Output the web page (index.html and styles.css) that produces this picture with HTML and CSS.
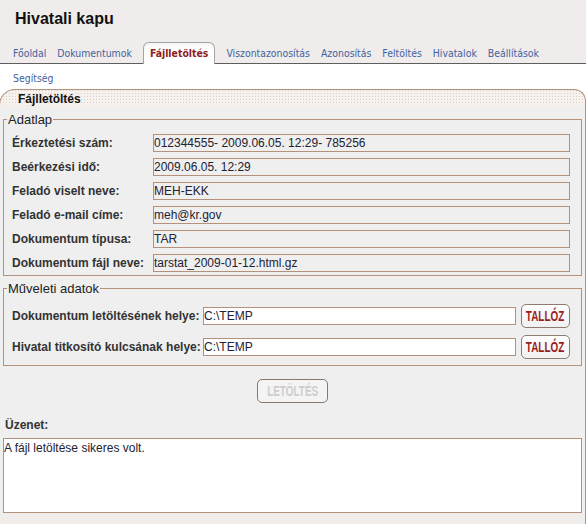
FILE: index.html
```html
<!DOCTYPE html>
<html lang="hu">
<head>
<meta charset="utf-8">
<title>Hivatali kapu</title>
<link rel="stylesheet" href="styles.css">
</head>
<body>
<div class="top">
  <div class="title">Hivatali kapu</div>
  <nav class="tabs">
    <a class="tab" href="#">Főoldal</a>
    <a class="tab" href="#">Dokumentumok</a>
    <a class="tab active" href="#">Fájlletöltés</a>
    <a class="tab" href="#">Viszontazonosítás</a>
    <a class="tab" href="#">Azonosítás</a>
    <a class="tab" href="#">Feltöltés</a>
    <a class="tab" href="#">Hivatalok</a>
    <a class="tab" href="#">Beállítások</a>
  </nav>
</div>
<div class="subnav"><a class="tab" href="#">Segítség</a></div>
<div class="panel">
  <div class="panel-head">Fájlletöltés</div>
  <div class="panel-body">
    <fieldset class="box">
      <legend>Adatlap</legend>
      <div class="grid">
        <label>Érkeztetési szám:</label><input class="ro" readonly value="012344555- 2009.06.05. 12:29- 785256">
        <label>Beérkezési idő:</label><input class="ro" readonly value="2009.06.05. 12:29">
        <label>Feladó viselt neve:</label><input class="ro" readonly value="MEH-EKK">
        <label>Feladó e-mail címe:</label><input class="ro" readonly value="meh@kr.gov">
        <label>Dokumentum típusa:</label><input class="ro" readonly value="TAR">
        <label>Dokumentum fájl neve:</label><input class="ro" readonly value="tarstat_2009-01-12.html.gz">
      </div>
    </fieldset>
    <fieldset class="box ops">
      <legend>Műveleti adatok</legend>
      <div class="grid2">
        <label>Dokumentum letöltésének helye:</label><input class="field" value="C:\TEMP"><button class="btn"><span>TALLÓZ</span></button>
        <label>Hivatal titkosító kulcsának helye:</label><input class="field" value="C:\TEMP"><button class="btn"><span>TALLÓZ</span></button>
      </div>
    </fieldset>
    <div class="actions"><button class="btn big" disabled><span>LETÖLTÉS</span></button></div>
    <div class="msg-label">Üzenet:</div>
    <textarea class="msg">A fájl letöltése sikeres volt.</textarea>
  </div>
  <div class="panel-foot"></div>
</div>
</body>
</html>
```
FILE: styles.css
```css
body {
  margin: 0;
  background: #ffffff;
  font-family: "Liberation Sans", Arial, sans-serif;
  overflow: hidden;
}

.top {
  background: #efeceb;
  padding-top: 10px;
}

.title {
  font: bold 16px/18px "Liberation Sans", Arial, sans-serif;
  color: #111111;
  padding-left: 15px;
  margin-bottom: 14px;
}

.tabs {
  display: flex;
  align-items: flex-end;
  gap: 1px;
  height: 21px;
  padding-left: 8px;
  border-bottom: 1px solid #5e5e5e;
}

.tab {
  font-family: Tahoma, "DejaVu Sans Condensed", "Liberation Sans", sans-serif;
  font-size: 10.4px;
  line-height: 20px;
  color: #3f62a0;
  text-decoration: none;
  padding: 0 5px;
  white-space: nowrap;
}

.tab.active {
  font-weight: bold;
  color: #8e1c1c;
  line-height: 21px;
  margin: 0 5px -1px 5px;
  padding: 0 6px;
  background: linear-gradient(#f6f6f6, #ffffff 40%);
  border: 1px solid #a4a4a4;
  border-bottom: none;
  border-radius: 6px 6px 0 0;
}

.subnav {
  background: #ffffff;
  height: 25px;
  padding-left: 8px;
  box-sizing: border-box;
  padding-top: 4px;
}

.subnav .tab {
  line-height: 14px;
  display: inline-block;
}

.panel {
  margin-left: -1px;
  width: 587px;
}

.panel-head {
  height: 19px;
  border: 1px solid #b4917a;
  border-bottom: none;
  border-radius: 16px 12px 0 0;
  padding-left: 18px;
  font: bold 12px/19px "Liberation Sans", Arial, sans-serif;
  color: #111111;
  background-color: #f5f1ef;
  background-image:
    linear-gradient(to bottom, transparent 15px, #f2eeec 15px),
    linear-gradient(to bottom, transparent 1px, #f5f1ef 1px),
    linear-gradient(to right, #decfc5 1px, transparent 1px);
  background-size: 100% 100%, 3px 3px, 3px 3px;
  background-repeat: no-repeat, repeat, repeat;
}

.panel-body {
  background: #efefef;
  border-left: 1px solid #b4917a;
  border-right: 1px solid #b4917a;
  padding: 3px 3px 1px 3px;
}

.panel-foot {
  height: 20px;
  background: #f1edeb;
  border-left: 1px solid #b4917a;
  border-right: 1px solid #b4917a;
}

.box {
  margin: 0;
  min-width: 0;
  border: 1px solid #b4917a;
  padding: 7px 11px 3px 8px;
}

.box legend {
  font: 13px/15px "Liberation Sans", Arial, sans-serif;
  color: #222222;
  padding: 0 1px;
  margin-left: -5px;
}

.box.ops {
  margin-top: 5px;
  padding-top: 8px;
  padding-bottom: 6px;
}

.grid {
  display: grid;
  grid-template-columns: 141px 1fr;
  grid-auto-rows: 18px;
  row-gap: 6px;
}

.grid2 {
  display: grid;
  grid-template-columns: 191px 1fr 54px;
  grid-auto-rows: 24px;
  row-gap: 7px;
  align-items: center;
}

label {
  font: bold 12px/18px "Liberation Sans", Arial, sans-serif;
  color: #333333;
  white-space: nowrap;
}

.ro, .field {
  box-sizing: border-box;
  height: 18px;
  margin: 0;
  padding: 0;
  border: 1px solid #b4917a;
  font: 12px "Liberation Sans", Arial, sans-serif;
  color: #222233;
  outline: none;
  width: 100%;
}

.ro {
  background: #efefef;
}

.field {
  background: #ffffff;
}

.btn {
  box-sizing: border-box;
  height: 24px;
  width: 49px;
  justify-self: end;
  margin: 0;
  padding: 0;
  border: 1px solid #8d7c70;
  border-radius: 5px;
  background: linear-gradient(#ffffff, #f1f1f1);
  color: #9b1c1c;
  font: bold 15px/22px "Liberation Sans", Arial, sans-serif;
  display: flex;
  justify-content: center;
  align-items: center;
  overflow: hidden;
}

.btn span {
  display: block;
  flex: none;
  transform: scaleX(0.66);
}

.actions {
  display: flex;
  justify-content: center;
  margin-top: 13px;
}

.btn.big {
  width: 71px;
  color: #cdcdcd;
  background: #f4f4f4;
  border-color: #8a786b;
}

.msg-label {
  font: bold 12px/14px "Liberation Sans", Arial, sans-serif;
  color: #333333;
  padding-left: 2px;
  margin-top: 15px;
  margin-bottom: 6px;
}

.msg {
  display: block;
  box-sizing: border-box;
  width: 100%;
  height: 75px;
  margin: 0;
  padding: 2px 0 0 0;
  border: 1px solid #b4917a;
  background: #ffffff;
  font: 12px/14px "Liberation Sans", Arial, sans-serif;
  color: #222233;
  resize: none;
  outline: none;
}
```
